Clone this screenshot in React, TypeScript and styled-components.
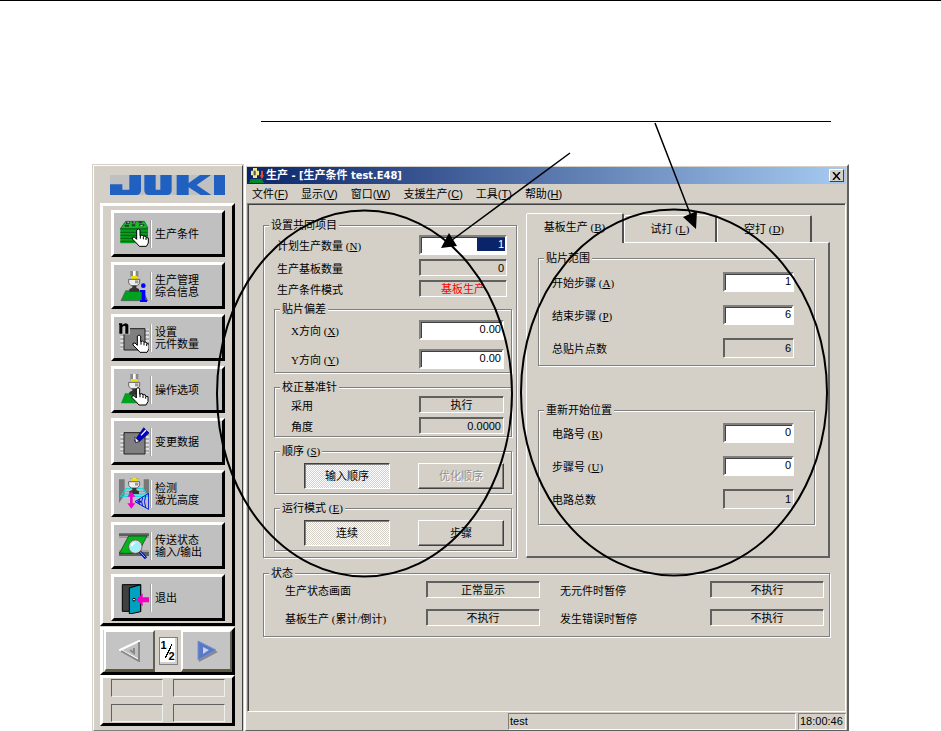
import React from "react";
import styled, { createGlobalStyle, css } from "styled-components";

const face = "#d4d0c8";
const sans = `"Liberation Sans", "Noto Sans CJK SC", sans-serif`;
const serif = `"Liberation Serif", "Noto Sans CJK SC", serif`;

const GlobalStyle = createGlobalStyle`
  *, *::before, *::after { box-sizing: border-box; }
  body { margin: 0; background: #fff; color: #000; font: 11px/14px ${sans}; }
  button, input { font: inherit; color: inherit; }
`;

const sunken = css`
  border: 2px solid;
  border-color: #808080 #fff #fff #808080;
  box-shadow: inset 1px 1px 0 #404040;
`;

const Stage = styled.div`
  position: relative;
  padding: 163px 92px 0;
  border-top: 1px solid #000;
`;

const Annotations = styled.svg`
  position: absolute;
  z-index: 2;
  top: -1px;
  left: 0;
  width: 100%;
  height: 731px;
  pointer-events: none;
`;

const Screen = styled.div`
  display: flex;
  background: ${face};
`;

/* ---------- side bar ---------- */

const Sidebar = styled.aside`
  flex: none;
  width: 152px;
  display: flex;
  flex-direction: column;
  padding: 9px 7px 4px 6px;
  border: 2px solid;
  border-color: #fff #404040 #808080 #fff;
  outline: 1px solid ${face};
  outline-offset: -1px;
`;

const Logo = styled.svg`
  display: block;
  width: 115px;
  height: 20px;
  margin: 0 0 8px 10px;
`;

const Panel = styled.div<{ $gap?: number }>`
  width: 135px;
  border: 3px solid;
  border-color: #fff #000 #000 #fff;
  margin-bottom: ${(p) => p.$gap ?? 0}px;
`;

const CommandList = styled(Panel).attrs({ as: "nav" })`
  display: flex;
  flex-direction: column;
  gap: 5px;
  padding: 4px 7px 2px 8px;
`;

const Command = styled.button`
  display: flex;
  align-items: center;
  height: 47px;
  padding: 0 0 0 5px;
  border: 3px solid;
  border-color: #fff #000 #000 #fff;
  background: #c0c0c0;
  text-align: left;
  line-height: 12px;
  white-space: pre;
`;

const CommandIcon = styled.svg`
  flex: none;
  width: 30px;
  height: 32px;
`;

const CommandText = styled.span`
  display: flex;
  align-items: center;
  height: 28px;
  margin-left: 2px;
  padding-left: 3px;
  border-left: 1px solid #fff;
  box-shadow: -1px 0 0 #a0a0a0;
`;

const Pager = styled(Panel)`
  display: flex;
  align-items: center;
  justify-content: space-between;
  height: 48px;
  padding: 0 0 0 1px;
`;

const PageButton = styled.button`
  display: grid;
  place-items: center;
  width: 51px;
  height: 42px;
  padding: 0;
  border: 3px solid;
  border-width: 2px 2px 3px 2px;
  border-color: #fff #606050 #5c5840 #fff;
  background: #c4c4c4;
`;

const PageNumber = styled.output`
  display: grid;
  grid-template: 11px 11px / 8px 8px;
  place-items: center;
  width: 19px;
  height: 28px;
  padding-top: 2px;
  border: 1px solid #808080;
  background: linear-gradient(115deg, transparent 47%, #000 47%, #000 55%, transparent 55%) 3px 6px / 11px 14px no-repeat #fff;
  font: bold 11px/11px ${sans};
  box-shadow: inset -2px -2px 0 #d0d0d0;
  & > :last-child { grid-area: 2 / 2; }
`;

const Slots = styled(Panel)`
  display: grid;
  grid-template-columns: 52px 52px;
  gap: 7px 10px;
  padding: 1px 7px 1px 8px;
`;

const Slot = styled.div`
  height: 18px;
  border: 1px solid;
  border-color: #606060 #f0f0ec #f0f0ec #606060;
`;

/* ---------- production window ---------- */

const Window = styled.main`
  flex: 1;
  min-width: 0;
  display: flex;
  flex-direction: column;
  padding: 1px;
  border: 2px solid;
  border-color: #fff #606060 #606060 #fff;
`;

const TitleBar = styled.header`
  display: flex;
  align-items: center;
  height: 17px;
  padding: 0 2px;
  background: linear-gradient(90deg, #0a246a, #a6caf0);
  color: #fff;
`;

const Title = styled.h1`
  flex: 1;
  margin: 0 0 0 2px;
  font: bold 11px/17px "DejaVu Sans Condensed", "Noto Sans CJK SC", sans-serif;
`;

const CloseButton = styled.button`
  display: grid;
  place-items: center;
  width: 15px;
  height: 13px;
  padding: 0;
  border: 1px solid;
  border-color: #fff #404040 #404040 #fff;
  background: ${face};
`;

const MenuBar = styled.nav`
  display: flex;
  gap: 13px;
  height: 19px;
  padding: 0 5px;
`;

const MenuItem = styled.button`
  padding: 0;
  border: 0;
  background: none;
  line-height: 20px;
`;

const Client = styled.div`
  flex: 1;
  padding: 8px 15px 8px 15px;
  border: 1px solid;
  border-color: #808080 #fff #fff #808080;
  box-shadow: inset 1px 1px 0 #404040;
`;

const Columns = styled.div`
  display: grid;
  grid-template-columns: 254fr 304fr;
  gap: 9px;
  padding-top: 1px;
`;

const Group = styled.fieldset<{ $pad: string; $above?: number }>`
  min-width: 0;
  margin: ${(p) => p.$above ?? 0}px 0 0;
  padding: ${(p) => p.$pad};
  border: 1px solid #808080;
  box-shadow: 1px 1px 0 #fff, inset 1px 1px 0 #fff;
`;

const Legend = styled.legend`
  height: 14px;
  margin-left: 5px;
  padding: 0 2px;
  background: ${face};
  line-height: 14px;
`;

const Fields = styled.div<{ $gap: number }>`
  display: flex;
  flex-direction: column;
  gap: ${(p) => p.$gap}px;
`;

const SubGroups = styled.div`
  display: flex;
  flex-direction: column;
  gap: 7px;
  padding: 5px 4px 0 10px;
`;

const Field = styled.div<{ $left: number; $right: number }>`
  display: flex;
  align-items: center;
  justify-content: space-between;
  padding: 0 ${(p) => p.$right}px 0 ${(p) => p.$left}px;
`;

const FieldLabel = styled.label`
  padding-top: 2px;
  white-space: nowrap;
`;

const Input = styled.input<{ $w: number; $selected?: boolean }>`
  width: ${(p) => p.$w}px;
  height: 20px;
  padding: 0 1px 2px;
  background: #fff;
  text-align: right;
  border-radius: 0;
  outline: none;
  ${sunken}
  ${(p) =>
    p.$selected &&
    css`
      color: #fff;
      background: linear-gradient(#0a246a, #0a246a) right 1px / 28px 13px no-repeat #fff;
    `}
`;

const Readout = styled.output<{ $w: number; $h: number; $center?: boolean; $alert?: boolean }>`
  display: block;
  flex: none;
  width: ${(p) => p.$w}px;
  height: ${(p) => p.$h}px;
  padding: 0 2px;
  border: 1px solid;
  border-color: #606060 #fff #fff #606060;
  box-shadow: inset 1px 1px 0 #606060;
  color: ${(p) => (p.$alert ? "#f00" : "inherit")};
  text-align: ${(p) => (p.$center ? "center" : "right")};
  line-height: ${(p) => p.$h - 1}px;
`;

const KeyText = styled.span`
  font-family: ${serif};
`;

const Choices = styled.div`
  display: flex;
  justify-content: flex-end;
  gap: 28px;
  padding-right: 7px;
`;

const Choice = styled.button<{ $pressed?: boolean }>`
  width: 86px;
  height: 26px;
  padding: 0;
  border: 1px solid;
  border-color: #fff #404040 #404040 #fff;
  box-shadow: inset -1px -1px 0 #808080;
  background: ${face};
  &:disabled {
    color: #909090;
    text-shadow: 1px 1px 0 #fff;
  }
  ${(p) =>
    p.$pressed &&
    css`
      border-color: #404040 #fff #fff #404040;
      box-shadow: inset 1px 1px 0 #808080;
      background: repeating-conic-gradient(#fff 0 25%, ${face} 0 50%) 0 0 / 2px 2px;
    `}
`;

const Notebook = styled.section`
  display: flex;
  flex-direction: column;
`;

const Tabs = styled.div`
  display: flex;
  align-items: flex-end;
  height: 29px;
`;

const Tab = styled.button<{ $w: number }>`
  width: ${(p) => p.$w}px;
  height: 27px;
  padding: 0;
  border: 1px solid;
  border-width: 1px 2px 0 1px;
  border-color: #fff #505050 transparent #fff;
  border-radius: 2px 2px 0 0;
  background: ${face};
  &[aria-selected="true"] {
    height: 30px;
    margin-bottom: -1px;
    padding-bottom: 3px;
    z-index: 1;
  }
`;

const TabPanel = styled.div`
  flex: 1;
  padding: 8px 13px 8px 11px;
  border: 1px solid;
  border-width: 1px 2px 2px 1px;
  border-color: #fff #606060 #606060 #fff;
`;

const StatusGrid = styled.div`
  display: grid;
  grid-template-columns: 276fr 273fr;
  gap: 11px 16px;
`;

const StatusBar = styled.footer`
  display: grid;
  grid-template-columns: 259px 1fr 48px;
  gap: 2px;
  height: 17px;
  padding-top: 1px;
`;

const StatusPane = styled.div`
  padding-left: 1px;
  border: 1px solid;
  border-color: #808080 #fff #fff #808080;
  line-height: 15px;
  white-space: nowrap;
`;

/* ---------- drawings ---------- */

const Hand = ({ x, y }: { x: number; y: number }) => (
  <path
    transform={`translate(${x} ${y})`}
    d="M15 4Q20-2 25 4V21L31 19 35 23 41 22 44 27 50 28V43L44 53H23L14 43 2 31V26L8 25 15 32Z M26 21V30M35 24V32M43 27V34"
    fill="#fff"
    stroke="#000"
    strokeWidth="3"
  />
);

const Nozzle = ({ y = 0 }: { y?: number }) => (
  <g transform={`translate(0 ${y})`}>
    <path d="M34 0H58V18H34Z" fill="#888" />
    <path d="M42 0H50V18H42Z" fill="#fff" />
    <path d="M36 15H56V25H36Z" fill="#f0dc00" />
    <path d="M29 25H62V36L55 44H36L29 36Z" fill="#eee" stroke="#666" strokeWidth="3" />
    <path d="M48 28H58V37H48Z" fill="#999" />
    <path d="M40 44H52V50L60 54V62H31V54L40 50Z" fill="#333" />
  </g>
);

const Chip = () => (
  <g>
    <path d="M4 24H16M4 30H16M4 36H16M4 42H16M4 48H16M4 54H16M4 60H16M4 66H16M4 72H16M4 78H16M78 24H90M78 30H90M78 36H90M78 42H90M78 48H90M78 54H90M78 60H90M78 66H90M78 72H90M78 78H90" stroke="#fff" strokeWidth="3" />
    <path d="M4 27H16M4 39H16M4 51H16M4 63H16M4 75H16M78 27H90M78 39H90M78 51H90M78 63H90M78 75H90" stroke="#444" strokeWidth="2" />
    <path d="M15 20H78V84H15Z" fill="#808080" stroke="#222" strokeWidth="3" />
  </g>
);

const icons: Record<string, React.ReactNode> = {
  box: (
    <>
      <path d="M4 32 20 10H76L87 30V76H4Z" fill="#0a9c1c" />
      <path d="M4 32 20 10H76L87 30Z" fill="#15bc28" stroke="#064" strokeWidth="2" />
      <path d="M21 15H32M39 13H51M59 13H70M17 23H30M38 22H49M60 22H76" stroke="#333" strokeWidth="6" />
      <path d="M25 14H30M43 12H49M64 23H71" stroke="#ccc" strokeWidth="3" />
      <path d="M4 33H87M4 43H87M4 52H87M4 61H87M4 70H87" stroke="#056611" strokeWidth="3" />
      <Hand x={38} y={32} />
    </>
  ),
  info: (
    <>
      <path d="M20 62H71L86 92H6Z" fill="#00a020" stroke="#555" strokeWidth="2" />
      <Nozzle y={3} />
      <circle cx="73" cy="47" r="7" fill="#00f" />
      <path d="M63 60H79V90H84V96H63V90H68V66H63Z" fill="#00f" />
    </>
  ),
  count: (
    <>
      <Chip />
      <rect x="0" y="0" width="33" height="37" fill="#c0c0c0" />
      <path d="M0 4H10V9Q22-1 28 9V35H19V13Q14 8 10 16V35H1V9H0Z" fill="#000" />
      <Hand x={40} y={38} />
    </>
  ),
  option: (
    <>
      <path d="M18 58H72L86 88H6Z" fill="#00a020" />
      <Nozzle />
      <Hand x={37} y={40} />
    </>
  ),
  edit: (
    <>
      <Chip />
      <path d="M47 44 74 5 90 21 62 46 50 50Z" fill="#00c" stroke="#000066" strokeWidth="2" />
      <path d="M47 33 61 46 50 50Z" fill="#eee" stroke="#222" strokeWidth="2" />
      <path d="M66 28 81 12" stroke="#fff" strokeWidth="4" />
    </>
  ),
  laser: (
    <>
      <path d="M0 4H17V50L0 75ZM74 4H90V54L74 40Z" fill="#777" />
      <path d="M20 32H74L87 55H5ZM14 40H79M10 48H84" fill="none" stroke="#00dce8" strokeWidth="3" />
      <Nozzle y={-14} />
      <path d="M37 40 49 56H41V76H49L37 92 25 76H33V56H25Z" fill="#f000c8" />
      <path d="M48 71 89 46V94ZM62 63Q57 71 62 80M71 58Q65 71 71 85M80 52Q73 71 80 89" fill="none" stroke="#0018e0" strokeWidth="3" />
      <path d="M55 71H67" stroke="#0018e0" strokeWidth="6" />
    </>
  ),
  transfer: (
    <>
      <path d="M0 10H90V19H0ZM0 66H90V78H0Z" fill="#606060" />
      <path d="M0 22H90M0 63H90" stroke="#999" strokeWidth="4" />
      <path d="M29 18H84L57 70H1Z" fill="#00b818" stroke="#222" strokeWidth="2" />
      <path d="M60 62 81 85" stroke="#0010b0" strokeWidth="9" />
      <path d="M60 62 79 82" stroke="#fff" strokeWidth="2" />
      <circle cx="49" cy="50" r="18" fill="#9ff0f8" stroke="#ddd" strokeWidth="5" />
      <circle cx="49" cy="50" r="20" fill="none" stroke="#333" strokeWidth="2" />
      <path d="M38 48Q41 39 49 39" fill="none" stroke="#fff" strokeWidth="5" />
    </>
  ),
  exit: (
    <>
      <path d="M10 8H65V88H10Z" fill="#404040" stroke="#000" strokeWidth="3" />
      <path d="M31 18 65 8V89L31 96Z" fill="#00a0c0" stroke="#000" strokeWidth="3" />
      <circle cx="45" cy="53" r="4" fill="#fff" stroke="#000" strokeWidth="3" />
      <path d="M52 53 71 34V46H90V61H71V73Z" fill="#f000c0" />
    </>
  ),
};

const commands: [string, string][] = [
  ["box", "生产条件"],
  ["info", "生产管理\n综合信息"],
  ["count", "设置\n元件数量"],
  ["option", "操作选项"],
  ["edit", "变更数据"],
  ["laser", "检测\n激光高度"],
  ["transfer", "传送状态\n输入/输出"],
  ["exit", "退出"],
];

const menus: [string, string][] = [
  ["文件", "F"],
  ["显示", "V"],
  ["窗口", "W"],
  ["支援生产", "C"],
  ["工具", "T"],
  ["帮助", "H"],
];

const Keyed = ({ text, k }: { text: string; k?: string }) => (
  <KeyText>
    {text}
    {k && (
      <>
        {" "}(<u>{k}</u>)
      </>
    )}
  </KeyText>
);

type RowProps = {
  id: string;
  label: string;
  k?: string;
  value: string;
  w: number;
  left: number;
  right: number;
  kind?: "input" | "output";
  h?: number;
  center?: boolean;
  alert?: boolean;
  selected?: boolean;
};

const Row = ({ id, label, k, value, w, left, right, kind = "output", h = 17, center, alert, selected }: RowProps) => (
  <Field $left={left} $right={right}>
    <FieldLabel htmlFor={id}>
      <Keyed text={label} k={k} />
    </FieldLabel>
    {kind === "input" ? (
      <Input id={id} $w={w} $selected={selected} defaultValue={value} />
    ) : (
      <Readout id={id} $w={w} $h={h} $center={center} $alert={alert}>
        {value}
      </Readout>
    )}
  </Field>
);

export default function App() {
  const common = { w: 88, left: 13, right: 9 };
  const sub = { w: 85, left: 16, right: 7 };
  const page = { w: 71, left: 13, right: 20 };
  const stateLeft = { w: 114, center: true, left: 21, right: 0 };
  const stateRight = { w: 114, center: true, left: 4, right: 5 };
  return (
    <>
      <GlobalStyle />
      <Stage>
        <Screen>
          <Sidebar>
            <Logo viewBox="0 0 345 60" role="img" aria-label="JUKI">
              <rect width="345" height="60" fill="#c0c0c0" />
              <g fill="#2060c0">
                <path d="M58 0H93V46Q93 60 79 60H0V28H37V44H58Z" />
                <path d="M103 0H137V44H151V0H185V46Q185 60 171 60H117Q103 60 103 46Z" />
                <path d="M200 0H236V24L270 0H303L260 30 304 60H272L236 37V60H200Z" />
                <rect x="312" width="33" height="60" />
              </g>
            </Logo>
            <CommandList $gap={1}>
              {commands.map(([icon, text]) => (
                <Command key={icon} type="button">
                  <CommandIcon viewBox="0 0 90 96" aria-hidden="true">{icons[icon]}</CommandIcon>
                  <CommandText>{text}</CommandText>
                </Command>
              ))}
            </CommandList>
            <Pager>
              <PageButton type="button" aria-label="上一页">
                <svg width="22" height="22" viewBox="0 0 22 22">
                  <path d="M20 1V20L1 10Z" fill="#c0c0c0" stroke="#fff" strokeWidth="2" />
                  <path d="M20 2V21L2 11M15 8V13L11 10" fill="none" stroke="#888" strokeWidth="2" />
                </svg>
              </PageButton>
              <PageNumber>
                <span>1</span>
                <span>2</span>
              </PageNumber>
              <PageButton type="button" aria-label="下一页">
                <svg width="22" height="22" viewBox="0 0 22 22">
                  <path d="M3 3V22L22 12Z" fill="#888" />
                  <path d="M2 1V20L20 10Z" fill="#5878c8" stroke="#7890d0" />
                  <path d="M7 7V14L13 10Z" fill="#c8d0e8" />
                </svg>
              </PageButton>
            </Pager>
            <Slots>
              <Slot />
              <Slot />
              <Slot />
              <Slot />
            </Slots>
          </Sidebar>

          <Window>
            <TitleBar>
              <svg width="15" height="15" viewBox="0 0 45 45" aria-hidden="true">
                <path d="M12 0H24V8H30V22H24V30H12V22H6V8H12Z" fill="#f0e890" />
                <path d="M14 8H20V22H14Z" fill="#555" />
                <path d="M5 33H38L45 45H0Z" fill="#008828" />
                <path d="M36 8H42V22H45L39 33 32 22H36Z" fill="#f04820" />
              </svg>
              <Title>生产 - [生产条件 test.E48]</Title>
              <CloseButton type="button" aria-label="关闭">
                <svg width="9" height="8" viewBox="0 0 9 8">
                  <path d="M1 0 8 8M8 0 1 8" stroke="#000" strokeWidth="1.5" />
                </svg>
              </CloseButton>
            </TitleBar>
            <MenuBar>
              {menus.map(([text, k]) => (
                <MenuItem key={k} type="button">
                  {text}(<u>{k}</u>)
                </MenuItem>
              ))}
            </MenuBar>

            <Client>
              <Columns>
                <Group $pad="3px 0 6px" $above={5}>
                  <Legend>设置共同项目</Legend>
                  <Fields $gap={4}>
                    <Row id="plan" label="计划生产数量" k="N" value="1" kind="input" selected {...common} />
                    <Row id="made" label="生产基板数量" value="0" {...common} />
                    <Row id="mode" label="生产条件模式" value="基板生产" center alert {...common} />
                  </Fields>
                  <SubGroups>
                    <Group $pad="4px 0 3px">
                      <Legend>贴片偏差</Legend>
                      <Fields $gap={9}>
                        <Row id="dx" label="X方向" k="X" value="0.00" kind="input" {...sub} />
                        <Row id="dy" label="Y方向" k="Y" value="0.00" kind="input" {...sub} />
                      </Fields>
                    </Group>
                    <Group $pad="2px 0">
                      <Legend>校正基准针</Legend>
                      <Fields $gap={4}>
                        <Row id="use" label="采用" value="执行" center {...sub} />
                        <Row id="angle" label="角度" value="0.0000" {...sub} />
                      </Fields>
                    </Group>
                    <Group $pad="5px 0 4px">
                      <Legend><Keyed text="顺序" k="S" /></Legend>
                      <Choices>
                        <Choice type="button" aria-pressed="true" $pressed>输入顺序</Choice>
                        <Choice type="button" disabled>优化顺序</Choice>
                      </Choices>
                    </Group>
                    <Group $pad="5px 0 4px">
                      <Legend><Keyed text="运行模式" k="E" /></Legend>
                      <Choices>
                        <Choice type="button" aria-pressed="true" $pressed>连续</Choice>
                        <Choice type="button">步骤</Choice>
                      </Choices>
                    </Group>
                  </SubGroups>
                </Group>

                <Notebook>
                  <Tabs role="tablist">
                    <Tab role="tab" aria-selected="true" $w={98}><Keyed text="基板生产" k="B" /></Tab>
                    <Tab role="tab" aria-selected="false" $w={93}><Keyed text="试打" k="L" /></Tab>
                    <Tab role="tab" aria-selected="false" $w={95}><Keyed text="空打" k="D" /></Tab>
                  </Tabs>
                  <TabPanel role="tabpanel">
                    <Group $pad="7px 0">
                      <Legend>贴片范围</Legend>
                      <Fields $gap={13}>
                        <Row id="start" label="开始步骤" k="A" value="1" kind="input" {...page} />
                        <Row id="end" label="结束步骤" k="P" value="6" kind="input" {...page} />
                        <Row id="total" label="总贴片点数" value="6" h={20} {...page} />
                      </Fields>
                    </Group>
                    <Group $pad="6px 0 15px" $above={37}>
                      <Legend>重新开始位置</Legend>
                      <Fields $gap={13}>
                        <Row id="circuit" label="电路号" k="R" value="0" kind="input" {...page} />
                        <Row id="step" label="步骤号" k="U" value="0" kind="input" {...page} />
                        <Row id="circuits" label="电路总数" value="1" h={20} {...page} />
                      </Fields>
                    </Group>
                  </TabPanel>
                </Notebook>
              </Columns>

              <Group $pad="1px 0 10px" $above={8}>
                <Legend>状态</Legend>
                <StatusGrid>
                  <Row id="s1" label="生产状态画面" value="正常显示" {...stateLeft} />
                  <Row id="s2" label="无元件时暂停" value="不执行" {...stateRight} />
                  <Row id="s3" label="基板生产 (累计/倒计)" value="不执行" {...stateLeft} />
                  <Row id="s4" label="发生错误时暂停" value="不执行" {...stateRight} />
                </StatusGrid>
              </Group>
            </Client>

            <StatusBar>
              <span />
              <StatusPane>test</StatusPane>
              <StatusPane>18:00:46</StatusPane>
            </StatusBar>
          </Window>
        </Screen>

        <Annotations viewBox="0 0 941 731" preserveAspectRatio="none" aria-hidden="true">
          <path d="M261 121.5H831" stroke="#000" />
          <g fill="none" stroke="#000" strokeWidth="2">
            <ellipse cx="364.5" cy="393.5" rx="147.5" ry="183" />
            <ellipse cx="674" cy="392.5" rx="153" ry="183" />
          </g>
          <path d="M570 153 448 243M655 123 691 216" stroke="#000" strokeWidth="1.5" />
          <path d="M441 248 449 233 457 246ZM696 229 683 217 697 211Z" />
        </Annotations>
      </Stage>
    </>
  );
}
